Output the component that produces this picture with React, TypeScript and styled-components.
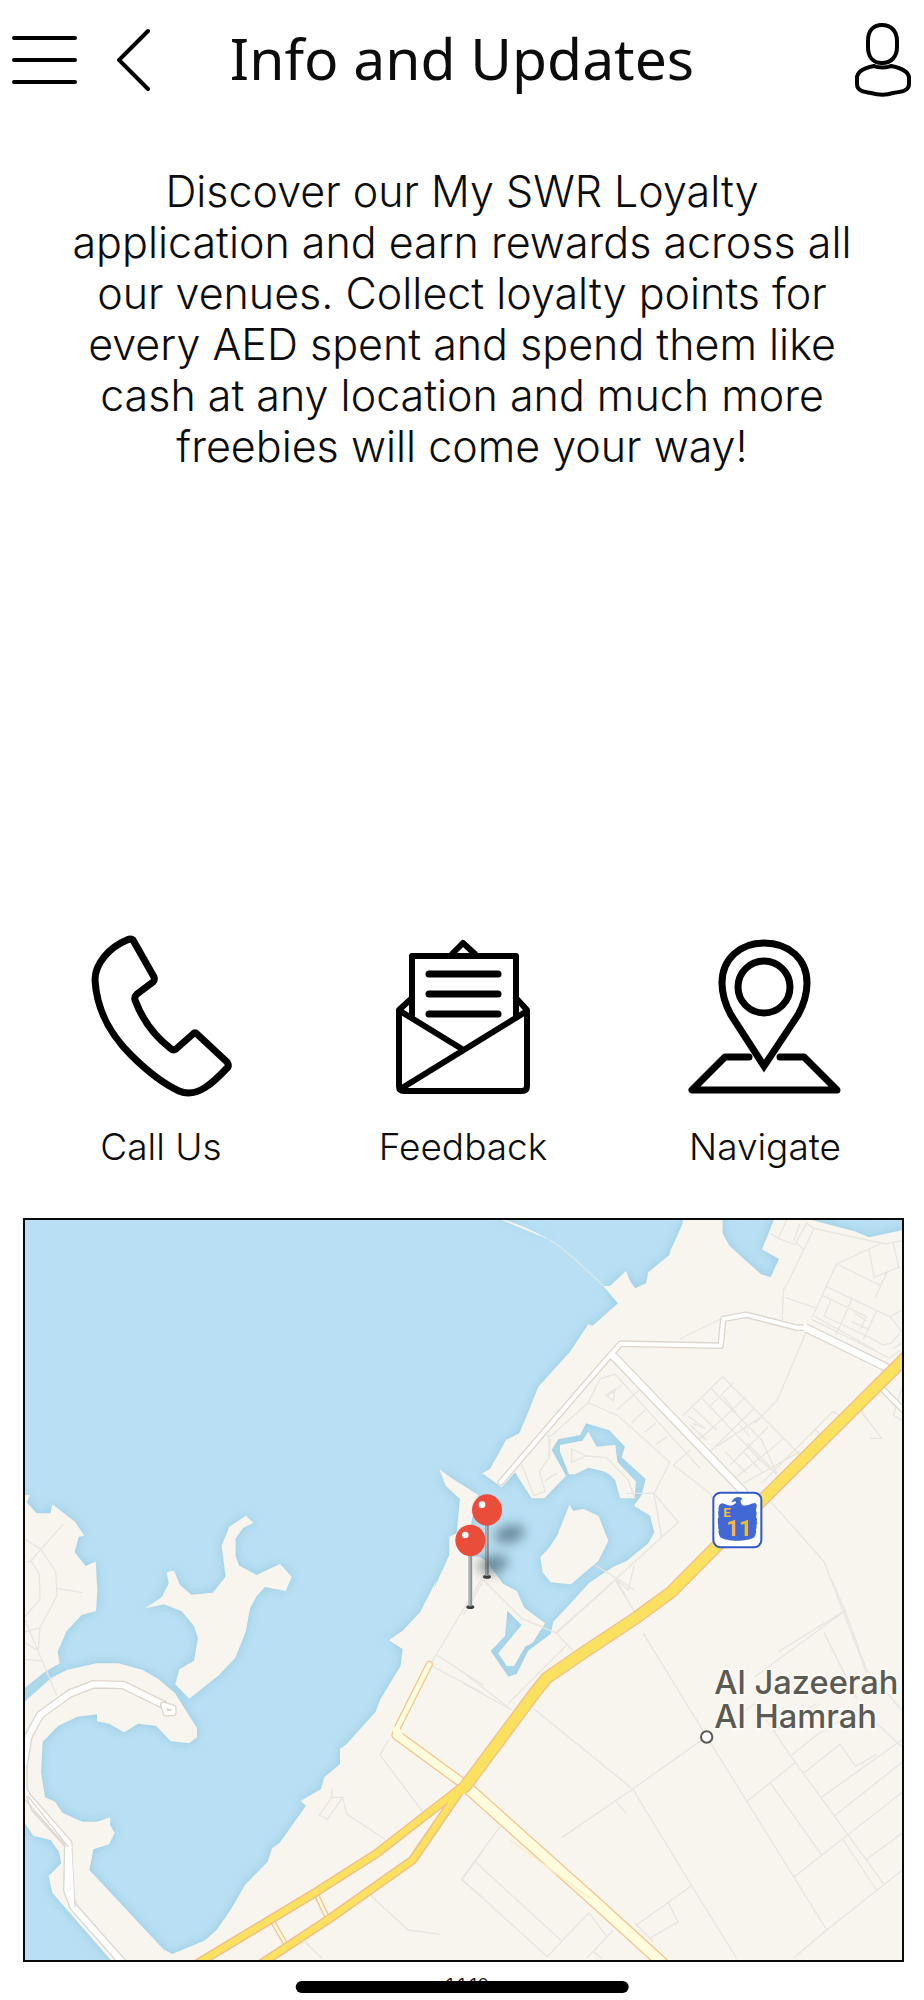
import React from "react";
import styled, { createGlobalStyle } from "styled-components";

const GlobalStyle = createGlobalStyle`
  *, *::before, *::after { box-sizing: border-box; }
  body {
    margin: 0;
    background: #fff;
    color: #0c0c0c;
    font-family: Inter, "Noto Sans", sans-serif;
    font-weight: 350;
  }
`;

const Page = styled.div`
  display: flex;
  flex-direction: column;
  min-height: 100vh;
`;

const Header = styled.header`
  display: grid;
  grid-template-columns: 1fr auto 1fr;
  align-items: center;
  height: 120px;
  padding: 0 12px;
`;

const HeaderSide = styled.div<{ $end?: boolean }>`
  display: flex;
  align-items: center;
  gap: 38px;
  justify-content: ${(p) => (p.$end ? "flex-end" : "flex-start")};
`;

const IconButton = styled.button`
  display: block;
  padding: 0;
  border: 0;
  background: none;
  color: #000;
  cursor: pointer;

  svg { display: block; }
`;

const Title = styled.h1`
  margin: 0;
  padding-bottom: 4px;
  font-family: "Noto Sans", sans-serif;
  font-size: 57px;
  line-height: 72px;
  font-weight: 400;
  white-space: nowrap;
`;

const Intro = styled.p`
  width: 100%;
  max-width: 840px;
  margin: 46px auto 0;
  padding: 0 16px;
  font-size: 43px;
  line-height: 51px;
  text-align: center;
`;

const Actions = styled.nav`
  display: grid;
  grid-template-columns: repeat(3, 1fr);
  margin-top: auto;
  padding: 0 8px 0 10px;
`;

const Action = styled.a`
  display: flex;
  flex-direction: column;
  align-items: center;
  gap: 24px;
  color: inherit;
  font-size: 37px;
  line-height: 44px;
  text-decoration: none;
`;

const MapFrame = styled.section`
  margin: 49px 20px 0 23px;
  border: 2px solid #0a0a0a;
  background: #b8dff3;

  svg { display: block; width: 100%; height: auto; }
`;

const Footer = styled.footer`
  position: relative;
  height: 38px;
  padding-top: 12px;
  font-size: 20px;
  line-height: 24px;
  text-align: center;
`;

const HomeIndicator = styled.div`
  position: absolute;
  left: 50%;
  bottom: 7px;
  width: 36%;
  height: 12px;
  border-radius: 6px;
  background: #000;
  transform: translateX(-50%);
`;

const MenuIcon = () => (
  <svg width="67" height="60" viewBox="12 30 67 60" stroke="currentColor" strokeWidth="4" strokeLinecap="round" aria-hidden="true">
    <path d="M14 38H75M14 60H75M14 82H75" />
  </svg>
);

const BackIcon = () => (
  <svg width="34" height="64" viewBox="117 28 34 64" fill="none" stroke="currentColor" strokeWidth="4" strokeLinecap="round" aria-hidden="true">
    <path d="M148 31L119 60L148 89" />
  </svg>
);

const UserIcon = () => (
  <svg width="58" height="76" viewBox="854 22 58 76" fill="none" stroke="currentColor" strokeWidth="4" aria-hidden="true">
    <path d="M882 25C891 25 897 31 897 41V47C897 57 891 63 882 63C873 63 868 57 868 47V41C868 31 873 25 882 25Z" />
    <path d="M874 66C864 68 857 72 857 78V84C857 91 864 92 871 93C878 95 887 95 893 93C901 92 909 91 909 84V78C909 72 901 68 891 66C887 68 878 68 874 66Z" />
  </svg>
);

const actionIcon = {
  width: 160,
  height: 170,
  fill: "none",
  stroke: "#000",
  strokeWidth: 7,
  strokeLinejoin: "round" as const,
  strokeLinecap: "round" as const,
  "aria-hidden": true,
};

const PhoneIcon = () => (
  <svg {...actionIcon} viewBox="81 931 160 170">
    <path d="M127 940C110 947 95 963 95 980C97 1013 112 1036 131 1055C147 1071 164 1084 179 1091C197 1099 214 1082 228 1067Q229 1065 227 1062L197 1034Q195 1032 193 1034L176 1049Q173 1051 170 1048C152 1034 141 1016 135 1000Q134 997 137 994L153 982Q155 980 154 977L133 940Q131 938 127 940Z" />
  </svg>
);

const MailIcon = () => (
  <svg {...actionIcon} strokeWidth="6" viewBox="383 930 160 170">
    <path d="M452 953L463 942L475 953M412 1014V955H516V1014M412 997L399 1009V1085Q399 1090 404 1090H522Q527 1090 527 1085V1009L516 997M400 1010L462 1048M527 1010L402 1087" />
    <path d="M429 973H498M429 993H498M429 1013H498" strokeWidth="7" />
  </svg>
);

const PinIcon = () => (
  <svg {...actionIcon} viewBox="685 930 160 170">
    <path d="M764 1065L731 1014C725 1003 722 993 722 982C722 958 740 942 764 942C789 942 807 958 807 982C807 993 804 1003 798 1014Z" strokeLinejoin="miter" />
    <circle cx="764" cy="986" r="26" />
    <path d="M749 1056H725L692 1089H837L804 1056H780" />
  </svg>
);

/* Map units: three to a pixel at the frame's natural width. */
const shift = (dx: number, dy: number, points: string) =>
  points
    .trim()
    .split(/\s+/)
    .map((pair) => {
      const [x, y] = pair.split(",").map(Number);
      return `${x + dx},${y + dy}`;
    })
    .join(" ");

const mainland = [
  shift(1320, 0, `670,20 668,40 650,82 632,120 628,135 565,187 558,220 525,235 510,213 498,183 450,228 430,228
    474,280 398,347 385,343 330,425 235,530 205,605 178,670 138,690 90,777 67,790 125,832 165,787 215,865 253,865
    318,797 275,720 295,688 360,675 378,640 447,660 495,710 485,742 557,807 545,855 522,887 570,917 583,967 565,1000
    500,1053 460,1070 388,1118 330,1182 280,1235 272,1272 205,1322 170,1392 145,1400 92,1323 135,1278 142,1202
    185,1245 115,1330 140,1368 162,1368 195,1310 218,1298 255,1240 193,1193 170,1143 130,1122 80,1055 60,1040 25,1040
    35,930 55,855 -25,805 -62,778 -43,827 0,867 -10,970 -32,980 -32,1035 -80,1140`),
  `1250,1110 1200,1207 1148,1262 1107,1291 1148,1317 1142,1367 1080,1470 1067,1505 980,1602 960,1617 960,1662
    913,1702 903,1737 842,1773 858,1787 778,1900 756,1915 743,1955 675,2025 635,2095 590,2160 553,2192 457,2232
    430,2218 208,1980 220,1918 267,1903 284,1868 270,1845 271,1822 232,1835 187,1835 127,1808 105,1775 75,1762
    63,1687 68,1595 115,1547 172,1520 231,1513 231,1534 268,1541 312,1567 354,1541 408,1547 452,1593 507,1600
    531,1582 531,1555 465,1450 415,1407 368,1380 295,1360 230,1360 140,1380 95,1403 25,1465 0,1490 0,1820 15,1840
    40,1877 92,1890 117,1925 124,1960 86,1998 97,2048 290,2270 2660,2270`,
  shift(1320, 0, `1340,58 1228,82 1183,64 1055,30 1050,20 945,20 942,30 906,118 957,147 932,202 903,193 808,107 788,70 788,20`),
].join(" ");

const northWestIsland = `0,855 30,855 20,877 50,910 92,910 97,883 165,935 193,977 176,980 164,1027 197,1068 227,1055
  232,1140 228,1203 185,1215 140,1263 113,1325 119,1360 75,1385 0,1445`;

const middleIsland = `678,917 700,939 670,953 647,985 647,1040 658,1067 710,1095 780,1062 815,1100 797,1143 735,1131
  710,1158 690,1195 677,1265 646,1343 597,1395 508,1466 466,1423 478,1378 522,1352 534,1285 522,1248 485,1204
  432,1183 375,1195 426,1161 446,1120 440,1087 462,1082 480,1125 514,1154 578,1148 617,1100 605,1007 628,950`;

const lagoonIslands = [
  `328,885 340,903 370,897 415,917 445,992 415,1053 333,1123 272,1117 248,1087 241,1042 270,1010 292,975`,
  `300,705 367,692 385,665 410,710 466,705 472,755 528,815 523,865 481,865 465,810 447,793 430,784 385,773 345,793
    327,793 300,725`,
];

const eastStreets = `
  M660 387L782 327M967 330L970 240L985 215L1062 55L1040 40L1008 98L1030 118M980 30L955 85L930 70M955 85L1008 105M1020 40L1000 95
  M1062 55L1275 102L1325 92M1260 102L1130 162L1055 325M1130 162L1262 227L1282 187L1243 202L1227 118M1243 202L1320 170M1300 98L1315 170
  M1262 227L1245 265M1100 230L1250 302L1290 320L1325 300M1088 257L1220 320M1072 296L975 262M1250 302L1210 388M1290 320L1325 365M1220 320L1200 358
  M1175 268L1128 375M1115 268L1092 318L1228 382L1270 405L1292 400L1320 370M1185 310L1220 332M1175 335L1230 360M1062 318L1245 420M1055 328L1290 445L1320 420M1300 415L1325 400
  M1037 370L952 570L885 640M270 680L385 578L475 618L630 757L582 850L655 937L605 982L582 850L500 850M385 578L420 507L465 492L720 775
  M437 555L465 537L460 572ZM485 525L440 560M538 540L470 600M555 600L515 638M588 640L553 667M622 680L585 705M265 675L270 740L238 785L255 845L222 857L185 762M290 790L255 812M272 685L265 740
  M335 717L378 738L335 757ZM378 738L440 743L505 810L525 865
  M668 618L788 500L1020 735M755 537L905 690L950 790M728 567L790 632L900 750L950 793M700 595L770 660M690 645L740 690M683 617L735 655L700 640M820 518L752 587M858 560L790 625L705 700M883 595L745 730M905 620L770 710M925 650L810 765M972 685L830 800M1020 725L850 820M790 560L830 610M835 640L870 680M795 725L860 790M860 700L930 770M850 725L910 790M640 765L750 850L770 890M640 765L690 720
  M910 850L1092 1055L1125 1140L1220 1390M905 820L1118 605L1145 620M1200 600L1265 685L1230 685M1065 655L1080 675M1325 535L1300 615L1325 630
  M405 1065L485 1115L522 1140M605 982L415 1155L285 1270M522 1068L505 1140L470 1110L500 1165M465 1110L545 1240
`;

const southStreets = `
  M550 160L740 470L1100 1050L1000 1135M1100 1050L1325 872M740 470L518 627L305 773M465 660L498 700M222 387L518 627L695 917L830 1135M695 917L530 1035M623 965L655 1025L570 1075
  M955 215L1155 92L1115 0M885 290L1155 92M1092 157L1190 355M1155 92L1220 270L1325 390M858 390L885 370L990 525L1270 910M995 525L1070 465L1200 385L1325 500M1005 548L858 667M930 607L1085 825M1030 580L1140 493L1187 560L1250 522M1083 653L1325 480M1123 708L1325 548M1163 765L1325 638M1220 838L1325 760M1003 890L1163 765M1150 780L1250 930M940 455L1070 370
  M70 0L185 115L290 160L340 215M10 105L65 10M0 270L155 390M10 310L155 390M325 190L145 370M290 160L460 5
  M120 740L5 897L262 1130L387 998M40 840L305 1083M387 998L440 1070M460 1050L380 1135M400 1115L425 1135M525 1030L580 1085
`;

const westStreets = `
  M130 942L30 1055M10 985L63 1018L107 1085L110 1140L112 1155L60 1253L55 1320M20 1055L35 1055L57 1090L60 1168L10 1225M112 1135L188 1148M15 1230L110 1455M10 1267L62 1253M10 1295L50 1320M15 1348L65 1353
  M1105 1590L1080 1635L1208 1805M1095 1888L980 1812L968 1762L922 1828L898 1815L935 1762H968M935 1735V1762M1050 2055L1165 2160L1260 2173M850 2190L905 2245M1230 1365L1335 1190L1390 1100M1250 1335L1390 1425M1230 1365L1390 1450M1390 1920L1325 2010L1390 2065
`;

type RoadProps = { d: string; width: number; kind?: "street" | "highway" | "main" };

const roadColours = {
  street: ["#ddd6cd", "#ffffff"],
  highway: ["#efc08a", "#fae160"],
  main: ["#f0c692", "#fdfddd"],
};

const Road = ({ d, width, kind = "street" }: RoadProps) => (
  <>
    <path d={d} stroke={roadColours[kind][0]} strokeWidth={width + 8} />
    <path d={d} stroke={roadColours[kind][1]} strokeWidth={width} />
  </>
);

const MapPin = ({ x, y }: { x: number; y: number }) => (
  <g transform={`translate(${x} ${y})`}>
    <ellipse cx="68" cy="72" rx="46" ry="26" transform="rotate(-14 68 72)" fill="#2b4552" opacity=".55" filter="url(#pinShadow)" />
    <ellipse cx="0" cy="200" rx="12" ry="6" fill="#3c3c3c" />
    <path d="M0 40V198" stroke="#8e9297" strokeWidth="11" />
    <path d="M-2 44V196" stroke="#b4b6ba" strokeWidth="4" />
    <ellipse cx="0" cy="0" rx="45" ry="47" fill="#eb4d3b" />
    <circle cx="-15" cy="-16" r="10" fill="#fff" />
  </g>
);

const AreaMap = () => (
  <svg viewBox="15 30 2631 2220" role="img" aria-label="Map of Al Jazeerah Al Hamrah">
    <defs>
      <filter id="shore" x="-5%" y="-5%" width="110%" height="110%">
        <feDropShadow dx="0" dy="0" stdDeviation="16" floodColor="#8fc4da" floodOpacity=".75" />
      </filter>
      <filter id="pinShadow" x="-60%" y="-100%" width="220%" height="300%">
        <feGaussianBlur stdDeviation="17" />
      </filter>
    </defs>
    <rect x="15" y="30" width="2631" height="2220" fill="#b8dff3" />
    <g fill="#f8f5ee" filter="url(#shore)">
      <polygon points={mainland} />
      <polygon points={northWestIsland} />
      <polygon points={middleIsland} />
      {lagoonIslands.map((points) => (
        <polygon key={points} points={shift(1320, 0, points)} />
      ))}
      <path d="M1455 30Q1530 55 1590 90Q1530 65 1445 30Z" />
    </g>
    <path d="M1590 90Q1640 120 1750 228" fill="none" stroke="#d3e7ec" strokeWidth="5" />

    <g fill="none" stroke="#e7e5df" strokeWidth="4">
      <path d={westStreets} />
      <path d={eastStreets} transform="translate(1320 0)" />
      <path d={southStreets} transform="translate(1320 1110)" />
    </g>

    <g fill="none" strokeLinejoin="round" strokeLinecap="round">
      <g transform="translate(0 1110)">
        <Road width={18} d="M432 375L310 315L220 313L150 340L60 405L25 470L10 560V630L22 650L145 790L142 930L160 980L310 1150" />
        <path d="M25 650L140 795L155 810L165 980M20 650L35 690L135 800" stroke="#ddd6cd" strokeWidth="4" />
        <path d="M150 800L158 960" stroke="#fff" strokeWidth="9" />
        <Road width={12} d="M430 375L460 383V398L438 400L430 375" />
      </g>
      <g transform="translate(1320 0)">
        <path d="M122 817L425 465L482 401L782 407L790 327L858 314L1010 353L1035 353M458 437L850 845M1035 353L1275 470M1265 535L1340 610" stroke="#ddd6cd" strokeWidth="20" />
        <path d="M462 440L850 845M1040 355L1275 470" stroke="#ddd6cd" strokeWidth="28" />
        <path d="M122 817L425 465L482 401L782 407L790 327L858 314L1010 353L1035 353M1265 535L1340 610" stroke="#fff" strokeWidth="12" />
        <path d="M462 440L850 845M1040 355L1275 470" stroke="#fff" strokeWidth="20" />
        <path d="M1035 342V362" stroke="#fff" strokeWidth="8" />
      </g>

      <Road kind="main" width={14} d="M1228 1363L1128 1562" />
      <Road kind="main" width={24} d="M1130 1575L1320 1714" />
      <Road kind="main" width={30} d="M1350 1740L1725 2075L1930 2262" />
      <path d="M1128 1560L1140 1580" stroke="#fdfddd" strokeWidth="22" />
      <path d="M1470 1890L1715 2068" stroke="#fbeec2" strokeWidth="4" />
      <Road kind="main" width={8} d="M890 2055L918 2115M758 2135L796 2200" />

      <path d="M1325 1735L1178 1950L930 2125L710 2270M1325 1732L1070 1930L890 2045L520 2268" stroke="#efc08a" strokeWidth="28" />
      <Road kind="highway" width={31} d="M2670 430L2225 872L1955 1145L1850 1222L1695 1325L1580 1404L1547 1445L1335 1730" />
      <path d="M1325 1735L1178 1950L930 2125L710 2270M1325 1732L1070 1930L890 2045L520 2268" stroke="#fae160" strokeWidth="19" />
      <path d="M1345 1715L1325 1740" stroke="#fae160" strokeWidth="28" />
    </g>

    <g transform="translate(2152 930)">
      <rect x="-72" y="-82" width="144" height="164" rx="22" fill="#fff" stroke="#3158c9" strokeWidth="6" />
      <path d="M-18 -53C-10 -70 8 -74 16 -62C8 -62 8 -54 14 -46C25 -38 38 -50 53 -51C62 -46 57 -38 56 -28C60 -22 57 -16 56 -8C62 -4 56 4 60 10C55 16 60 24 55 30C59 36 54 44 51 52C30 66 -32 66 -51 52C-55 44 -59 36 -55 30C-60 24 -55 16 -59 10C-57 4 -61 -4 -56 -8C-57 -16 -59 -24 -56 -29C-58 -40 -54 -49 -45 -50C-34 -48 -26 -39 -12 -46C-4 -50 -2 -54 -6 -56Z" fill="#4168d5" />
      <text fill="#f8b93c" fontFamily="Roboto, sans-serif" fontWeight="700">
        <tspan x="-42" y="-8" fontSize="40">E</tspan>
        <tspan x="-33" y="48" fontSize="66">11</tspan>
      </text>
    </g>

    <circle cx="2060" cy="1581" r="17" fill="#fff" stroke="#5b5953" strokeWidth="6" />
    <text
      fill="#5b5953"
      stroke="#fbf9f4"
      strokeWidth="12"
      strokeLinejoin="round"
      paintOrder="stroke"
      fontFamily="Inter, sans-serif"
      fontWeight="500"
      fontSize="98"
    >
      <tspan x="2083" y="1451">Al Jazeerah</tspan>
      <tspan x="2083" y="1554">Al Hamrah</tspan>
    </text>

    <MapPin x={1401} y={900} />
    <MapPin x={1351} y={991} />
  </svg>
);

const actions = [
  { label: "Call Us", href: "#call", Icon: PhoneIcon },
  { label: "Feedback", href: "#feedback", Icon: MailIcon },
  { label: "Navigate", href: "#navigate", Icon: PinIcon },
];

export default function App() {
  return (
    <>
      <GlobalStyle />
      <Page>
        <Header>
          <HeaderSide>
            <IconButton type="button" aria-label="Menu"><MenuIcon /></IconButton>
            <IconButton type="button" aria-label="Back"><BackIcon /></IconButton>
          </HeaderSide>
          <Title>Info and Updates</Title>
          <HeaderSide $end>
            <IconButton type="button" aria-label="Profile"><UserIcon /></IconButton>
          </HeaderSide>
        </Header>
        <Intro>
          Discover our My SWR Loyalty application and earn rewards across all our venues. Collect
          loyalty points for every AED spent and spend them like cash at any location and much more
          freebies will come your way!
        </Intro>
        <Actions aria-label="Contact">
          {actions.map(({ label, href, Icon }) => (
            <Action key={label} href={href}>
              <Icon />
              {label}
            </Action>
          ))}
        </Actions>
        <MapFrame>
          <AreaMap />
        </MapFrame>
        <Footer>
          v1.1.10
          <HomeIndicator />
        </Footer>
      </Page>
    </>
  );
}
